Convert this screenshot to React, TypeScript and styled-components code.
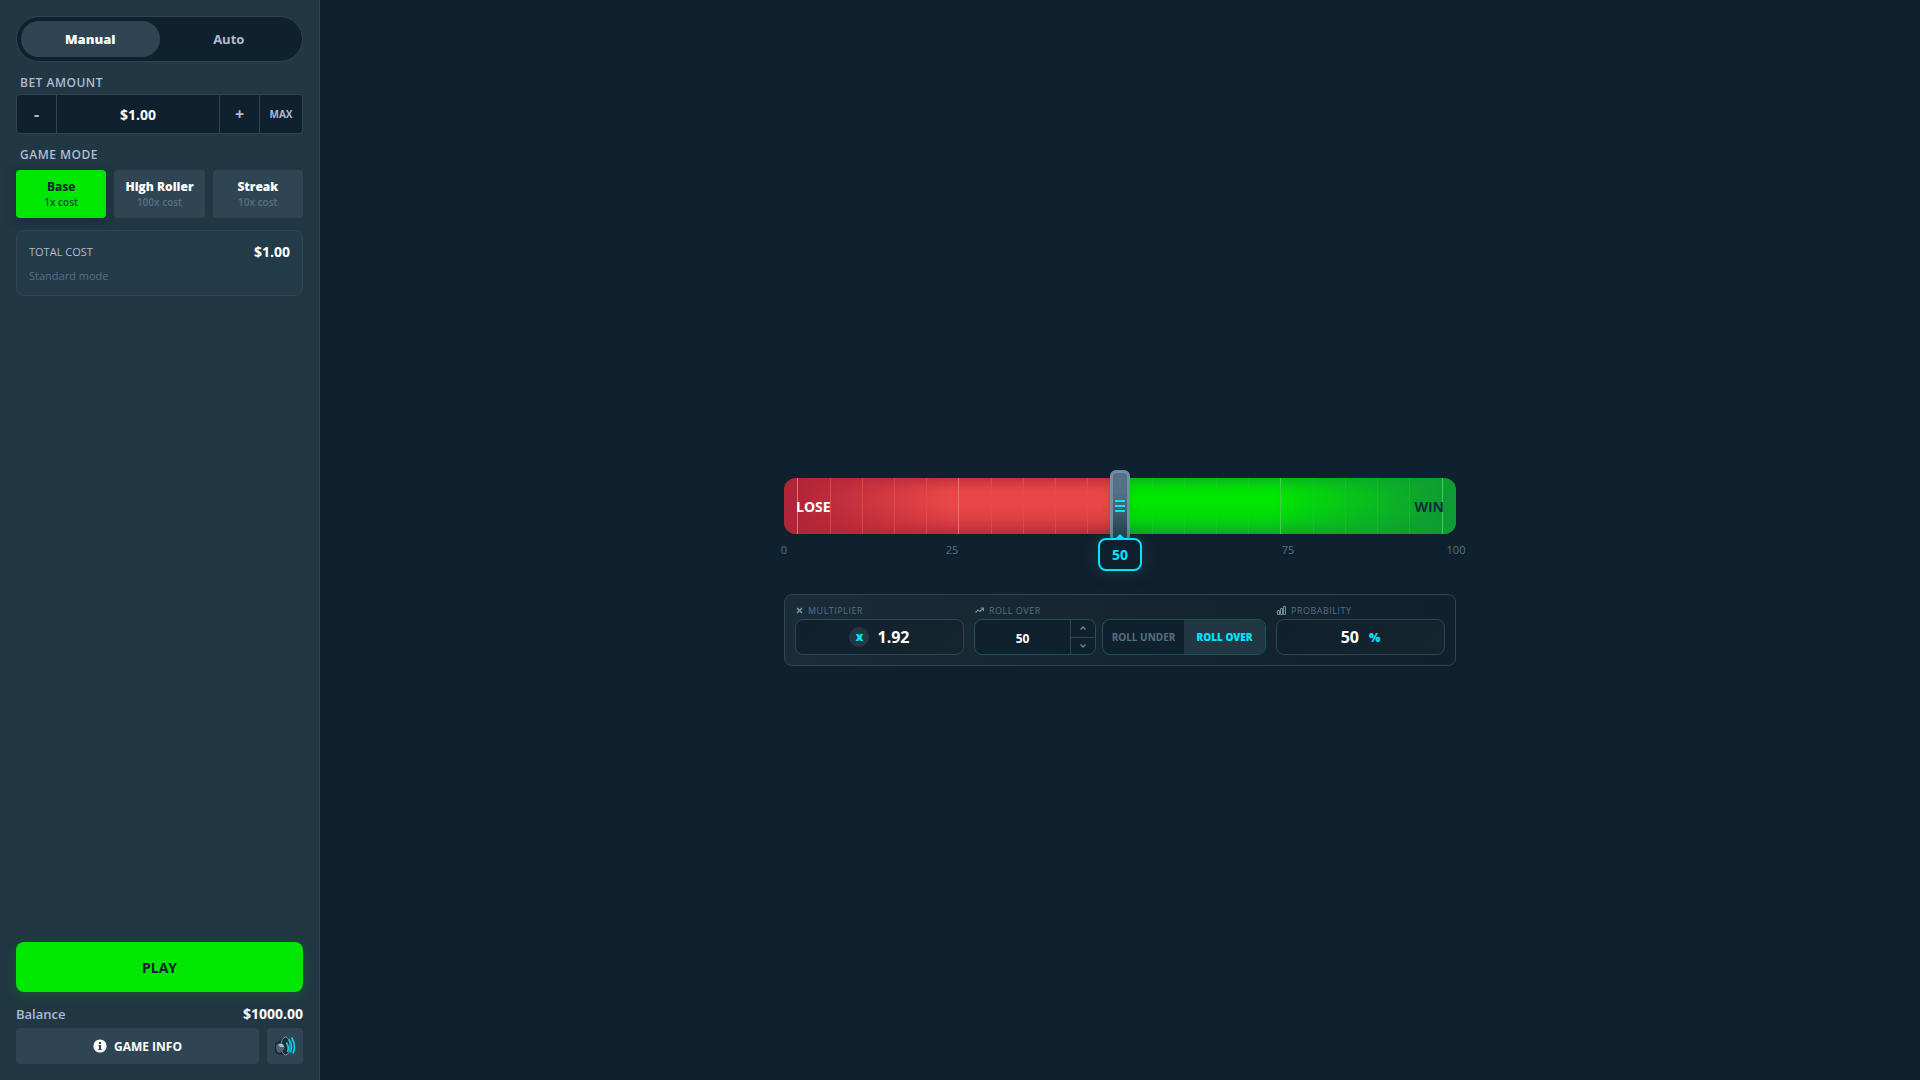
import React, { useState } from "react";
import styled, { createGlobalStyle, css } from "styled-components";

const GlobalStyle = createGlobalStyle`
  *, *::before, *::after { box-sizing: border-box; }
  body {
    margin: 0;
    background: #0f212e;
    color: #fff;
    font-family: "Open Sans", "Noto Sans", sans-serif;
  }
  button, input { font-family: inherit; color: inherit; margin: 0; padding: 0; border: 0; background: none; }
  button { cursor: pointer; }
`;

const Page = styled.div`
  display: flex;
  min-height: 100vh;
`;

const Sidebar = styled.aside`
  flex: 0 0 320px;
  min-width: 0;
  display: flex;
  flex-direction: column;
  padding: 16px;
  background: #213743;
  border-right: 1px solid #2f4553;
`;

const Tabs = styled.div`
  display: flex;
  padding: 4px;
  border: 1px solid #2f4553;
  border-radius: 24px;
  background: #0f212e;
`;

const Tab = styled.button<{ $active: boolean }>`
  flex: 1;
  height: 36px;
  border-radius: 18px;
  font-size: 13px;
  font-weight: ${(p) => (p.$active ? 800 : 700)};
  color: ${(p) => (p.$active ? "#fff" : "#b1bad3")};
  background: ${(p) => (p.$active ? "#2f4553" : "transparent")};
`;

const FieldLabel = styled.label`
  display: block;
  margin-top: 13px;
  padding: 0 4px;
  font-size: 12px;
  line-height: 16px;
  font-weight: 600;
  letter-spacing: 0.5px;
  color: #b1bad3;
`;

const BetRow = styled.div`
  display: flex;
  height: 40px;
  margin-top: 3px;
  border: 1px solid #2f4553;
  border-radius: 4px;
  background: #0f212e;
  overflow: hidden;
`;

const BetStep = styled.button`
  flex: 0 0 39px;
  font-size: 16px;
  font-weight: 700;
  color: #b1bad3;
`;

const BetInput = styled.input`
  flex: 1;
  width: 0;
  min-width: 0;
  border-left: 1px solid #2f4553;
  border-right: 1px solid #2f4553;
  text-align: center;
  font-size: 14px;
  font-weight: 700;
`;

const MaxButton = styled(BetStep)`
  flex-basis: 43px;
  border-left: 1px solid #2f4553;
  font-size: 10px;
  font-weight: 700;
`;

const Modes = styled.div`
  display: grid;
  grid-template-columns: repeat(3, 1fr);
  gap: 8px;
  margin-top: 7px;
`;

const ModeButton = styled.button<{ $active: boolean }>`
  display: flex;
  flex-direction: column;
  align-items: center;
  justify-content: center;
  height: 48px;
  border-radius: 4px;
  font-size: 12px;
  line-height: 16px;
  font-weight: ${(p) => (p.$active ? 700 : 800)};
  white-space: nowrap;
  background: ${(p) => (p.$active ? "#00e701" : "#2f4553")};
  color: ${(p) => (p.$active ? "#0f212e" : "#fff")};
  box-shadow: ${(p) => (p.$active ? "0 4px 12px rgba(15, 33, 46, 0.4)" : "none")};
`;

const ModeCost = styled.span<{ $active: boolean }>`
  font-size: 10px;
  line-height: 14px;
  font-weight: 600;
  color: ${(p) => (p.$active ? "#1a5037" : "#557086")};
`;

const CostCard = styled.section`
  margin-top: 12px;
  padding: 13px 12px 11px;
  border: 1px solid #2f4553;
  border-radius: 8px;
  background: #233a48;
`;

const Line = styled.div`
  display: flex;
  align-items: center;
  justify-content: space-between;
`;

const CostLabel = styled.span`
  font-size: 11px;
  line-height: 16px;
  color: #b1bad3;
`;

const Amount = styled.strong`
  font-size: 14px;
  line-height: 16px;
  font-weight: 700;
`;

const CostNote = styled.p`
  margin: 8px 0 0;
  font-size: 11px;
  line-height: 16px;
  color: #557086;
`;

const SidebarFooter = styled.footer`
  display: flex;
  flex-direction: column;
  margin-top: auto;
`;

const PlayButton = styled.button`
  height: 50px;
  border-radius: 8px;
  background: #00e701;
  box-shadow: 0 4px 12px rgba(0, 231, 1, 0.15);
  color: #0f212e;
  font-size: 14px;
  font-weight: 700;
`;

const BalanceLine = styled(Line)`
  margin: 12px 0 4px;
  font-size: 13px;
  line-height: 20px;
  font-weight: 600;
  color: #b1bad3;
`;

const BalanceValue = styled(Amount)`
  color: #fff;
`;

const FooterActions = styled.div`
  display: flex;
  gap: 8px;
`;

const InfoButton = styled.button`
  flex: 1;
  display: flex;
  align-items: center;
  justify-content: center;
  gap: 7px;
  height: 36px;
  border-radius: 4px;
  background: #2f4553;
  font-size: 12px;
  font-weight: 700;
`;

const SoundButton = styled(InfoButton)`
  flex: 0 0 36px;
`;

const Main = styled.main`
  flex: 1;
  display: flex;
  flex-direction: column;
  align-items: center;
  justify-content: center;
  padding: 64px 24px 0;
`;

const Game = styled.div`
  width: 100%;
  max-width: 672px;
`;

const TrackArea = styled.div`
  position: relative;
`;

const Track = styled.div`
  position: relative;
  display: flex;
  height: 56px;
  border-radius: 12px;
  overflow: hidden;
`;

const Zone = styled.div<{ $win?: boolean }>`
  flex: 1;
  display: flex;
  align-items: center;
  justify-content: ${(p) => (p.$win ? "flex-end" : "flex-start")};
  padding: 0 12px;
  font-size: 14px;
  font-weight: 700;
  ${(p) =>
    p.$win
      ? css`
          color: #0f2f3a;
          background: linear-gradient(180deg, rgba(14, 156, 52, 0) 45%, rgba(14, 156, 52, 0.4)),
            linear-gradient(275deg, #109c34 5%, #00e701 55%);
          box-shadow: inset 0 0 14px 3px #109c34;
        `
      : css`
          color: #fff;
          background: linear-gradient(180deg, rgba(178, 37, 56, 0) 45%, rgba(178, 37, 56, 0.4)),
            linear-gradient(85deg, #b22538 5%, #e94848 50%);
          box-shadow: inset 0 0 14px 3px #b22538;
        `}
`;

const ZoneName = styled.span`
  position: relative;
  z-index: 1;
`;

const Ticks = styled.div`
  position: absolute;
  inset: 0 2%;
  display: flex;
  justify-content: space-between;
  pointer-events: none;
`;

const Tick = styled.i<{ $major: boolean; $win: boolean }>`
  width: 1px;
  background: ${(p) => (p.$win ? (p.$major ? "#3fce4c" : "#20d030") : p.$major ? "#e87070" : "#e94848")};
  opacity: ${(p) => (p.$major ? 1 : p.$win ? 0.35 : 0.8)};
`;

const Handle = styled.div`
  position: absolute;
  top: -8px;
  left: 50%;
  width: 20px;
  height: 72px;
  margin-left: -10px;
  display: flex;
  flex-direction: column;
  align-items: center;
  justify-content: center;
  gap: 3px;
  border: 3px solid #708fa0;
  border-radius: 6px;
  background: linear-gradient(180deg, #557086 30%, #213f4b);
`;

const Grip = styled.i`
  width: 10px;
  height: 2px;
  background: #00e5ff;
`;

const Bubble = styled.output`
  position: absolute;
  top: 60px;
  left: 50%;
  width: 44px;
  height: 33px;
  margin-left: -22px;
  display: flex;
  align-items: center;
  justify-content: center;
  border: 2px solid #00e5ff;
  border-radius: 8px;
  background: #0f212e;
  box-shadow: 0 0 16px rgba(47, 69, 83, 0.6);
  color: #00e5ff;
  font-size: 14px;
  font-weight: 700;
  &::before {
    content: "";
    position: absolute;
    top: -6px;
    left: 16px;
    border: 4px solid transparent;
    border-top: 0;
    border-bottom-color: #00e5ff;
  }
`;

const Scale = styled.div`
  display: flex;
  justify-content: space-between;
  height: 16px;
  margin-top: 8px;
  font-size: 11px;
  line-height: 16px;
  color: #557086;
`;

const ScaleMark = styled.span`
  width: 0;
  display: flex;
  justify-content: center;
`;

const Controls = styled.section`
  display: grid;
  grid-template-columns: 169fr 292fr 169fr;
  gap: 10px;
  margin-top: 36px;
  padding: 7px 10px 10px;
  border: 1px solid #2f4553;
  border-radius: 8px;
  background: linear-gradient(90deg, #1a2c38, #15252f 60%, #0f212e);
`;

const ControlLabel = styled.label`
  display: flex;
  align-items: center;
  gap: 5px;
  height: 16px;
  margin-bottom: 1px;
  padding-left: 1px;
  font-size: 9px;
  letter-spacing: 0.5px;
  color: #557086;
`;

const ValueBox = styled.div`
  display: flex;
  align-items: center;
  justify-content: center;
  gap: 8px;
  height: 36px;
  border: 1px solid #2f4553;
  border-radius: 8px;
  background: linear-gradient(135deg, #0f212e, #15252f);
`;

const Value = styled.output`
  font-size: 16px;
  font-weight: 700;
`;

const TimesBadge = styled.span`
  display: grid;
  place-items: center;
  width: 20px;
  height: 20px;
  border-radius: 50%;
  background: #213743;
  color: #00e5ff;
  font-size: 12px;
  line-height: 20px;
  font-weight: 800;
`;

const Percent = styled.span`
  padding-left: 2px;
  font-size: 12px;
  font-weight: 800;
  color: #00e5ff;
`;

const RollRow = styled.div`
  display: grid;
  grid-template-columns: 122fr 164fr;
  gap: 6px;
`;

const RollBox = styled.div`
  display: flex;
  height: 36px;
  border: 1px solid #1d5257;
  border-radius: 8px;
  background: #0f212e;
  overflow: hidden;
`;

const RollInput = styled.input`
  flex: 1;
  width: 0;
  min-width: 0;
  padding-top: 2px;
  text-align: center;
  font-size: 12px;
  font-weight: 700;
`;

const Stepper = styled.div`
  flex: 0 0 25px;
  display: flex;
  flex-direction: column;
  border-left: 1px solid #2f4553;
`;

const StepButton = styled.button`
  flex: 1;
  display: grid;
  place-items: center;
  & + & { border-top: 1px solid #2f4553; }
`;

const DirectionButton = styled.button<{ $active: boolean }>`
  flex: 1;
  white-space: nowrap;
  font-size: 10px;
  font-weight: ${(p) => (p.$active ? 800 : 700)};
  color: ${(p) => (p.$active ? "#00e5ff" : "#557086")};
  background: ${(p) => (p.$active ? "#213743" : "transparent")};
`;

const InfoIcon = () => (
  <svg width="14" height="14" viewBox="0 0 14 14" aria-hidden="true">
    <circle cx="7" cy="7" r="6.6" fill="#fff" />
    <path d="M6 3h2v2H6zM5.4 6H8v4h.7v1H5.4v-1H6V7h-.6z" fill="#2f4553" />
  </svg>
);

const SpeakerIcon = () => (
  <svg width="20" height="20" viewBox="0 0 20 20" aria-hidden="true">
    <path d="M0 8.500Q0 6.500 3 6L9 1.500V19L3 18.500Q0 17 0 14z" fill="#152631" />
    <ellipse cx="10.500" cy="10" rx="4.500" ry="9" fill="#1b2f3b" stroke="#7f929d" strokeWidth="1" />
    <path d="M1 9q3-3 7-1l2 3-2 4q-3 3-6 1-1-3-1-7z" fill="#4d6371" />
    <path d="M3 8.500q3-1.500 5 0l1 2.500H5z" fill="#a9bac4" />
    <path d="M11.500 6.500q3 5 1 9.500M14 3.500q4 6 1.500 13M16.500 1.500q5 8 1.500 16" fill="none" stroke="#00d5ee" strokeWidth="1.600" />
  </svg>
);

const CrossIcon = () => (
  <svg width="7" height="7" viewBox="0 0 7 7" fill="none" stroke="#6fa9a6" strokeWidth="1.400" aria-hidden="true">
    <path d="M1 1l5 5M6 1L1 6" />
  </svg>
);

const TrendIcon = () => (
  <svg width="9" height="7" viewBox="0 0 9 7" fill="none" stroke="#6f8f9f" strokeWidth="1.200" aria-hidden="true">
    <path d="M.5 5.500L3 3l2 1.500L8 1.500M5.500 1h3v3" />
  </svg>
);

const BarsIcon = () => (
  <svg width="9" height="9" viewBox="0 0 9 9" fill="none" stroke="#6f8f9f" aria-hidden="true">
    <path d="M.5 8.500v-4h2v4zM3.500 8.500v-6h2v6zM6.500 8.500v-8h2v8z" />
  </svg>
);

const Chevron = ({ down }: { down?: boolean }) => (
  <svg width="6" height="4" viewBox="0 0 6 4" fill="none" stroke="#6d8796" strokeWidth="1.300" aria-hidden="true">
    <path d={down ? "M.5 .5L3 3L5.500 .5" : "M.5 3.500L3 1L5.500 3.500"} />
  </svg>
);

const MODES = [
  { name: "Base", cost: 1, note: "Standard mode" },
  { name: "High Roller", cost: 100, note: "High roller mode" },
  { name: "Streak", cost: 10, note: "Streak mode" },
];

const SCALE = [0, 25, 50, 75, 100];

export default function App() {
  const [tab, setTab] = useState("Manual");
  const [mode, setMode] = useState(0);
  const [bet, setBet] = useState("$1.00");
  const [target, setTarget] = useState(50);
  const [direction, setDirection] = useState("ROLL OVER");

  const amount = Number(bet.replace("$", "")) || 0;
  const setAmount = (n: number) => setBet("$" + Math.max(0, n).toFixed(2));

  return (
    <Page>
      <GlobalStyle />
      <Sidebar>
        <Tabs>
          {["Manual", "Auto"].map((name) => (
            <Tab key={name} $active={tab === name} onClick={() => setTab(name)}>
              {name}
            </Tab>
          ))}
        </Tabs>

        <FieldLabel htmlFor="bet">BET AMOUNT</FieldLabel>
        <BetRow>
          <BetStep onClick={() => setAmount(amount - 1)}>-</BetStep>
          <BetInput id="bet" value={bet} onChange={(e) => setBet(e.target.value)} />
          <BetStep onClick={() => setAmount(amount + 1)}>+</BetStep>
          <MaxButton onClick={() => setAmount(1000)}>MAX</MaxButton>
        </BetRow>

        <FieldLabel as="div">GAME MODE</FieldLabel>
        <Modes>
          {MODES.map((m, i) => (
            <ModeButton key={m.name} $active={i === mode} onClick={() => setMode(i)}>
              {m.name}
              <ModeCost $active={i === mode}>{m.cost}x cost</ModeCost>
            </ModeButton>
          ))}
        </Modes>

        <CostCard>
          <Line>
            <CostLabel>TOTAL COST</CostLabel>
            <Amount>${(amount * MODES[mode].cost).toFixed(2)}</Amount>
          </Line>
          <CostNote>{MODES[mode].note}</CostNote>
        </CostCard>

        <SidebarFooter>
          <PlayButton>PLAY</PlayButton>
          <BalanceLine>
            Balance
            <BalanceValue>$1000.00</BalanceValue>
          </BalanceLine>
          <FooterActions>
            <InfoButton>
              <InfoIcon />
              GAME INFO
            </InfoButton>
            <SoundButton aria-label="Sound">
              <SpeakerIcon />
            </SoundButton>
          </FooterActions>
        </SidebarFooter>
      </Sidebar>

      <Main>
        <Game>
          <TrackArea>
            <Track>
              <Zone>
                <ZoneName>LOSE</ZoneName>
              </Zone>
              <Zone $win>
                <ZoneName>WIN</ZoneName>
              </Zone>
              <Ticks>
                {Array.from({ length: 21 }, (_, i) => (
                  <Tick key={i} $major={i % 5 === 0} $win={i > 10} />
                ))}
              </Ticks>
            </Track>
            <Handle>
              <Grip />
              <Grip />
              <Grip />
            </Handle>
            <Bubble>{target}</Bubble>
          </TrackArea>
          <Scale>
            {SCALE.map((n) => (
              <ScaleMark key={n}>{n === 50 ? "" : n}</ScaleMark>
            ))}
          </Scale>

          <Controls>
            <div>
              <ControlLabel htmlFor="multiplier">
                <CrossIcon />
                MULTIPLIER
              </ControlLabel>
              <ValueBox>
                <TimesBadge>x</TimesBadge>
                <Value id="multiplier">1.92</Value>
              </ValueBox>
            </div>
            <div>
              <ControlLabel htmlFor="roll">
                <TrendIcon />
                ROLL OVER
              </ControlLabel>
              <RollRow>
                <RollBox>
                  <RollInput id="roll" value={target} onChange={(e) => setTarget(Number(e.target.value) || 0)} />
                  <Stepper>
                    <StepButton aria-label="Increase" onClick={() => setTarget(target + 1)}>
                      <Chevron />
                    </StepButton>
                    <StepButton aria-label="Decrease" onClick={() => setTarget(target - 1)}>
                      <Chevron down />
                    </StepButton>
                  </Stepper>
                </RollBox>
                <RollBox>
                  {["ROLL UNDER", "ROLL OVER"].map((d) => (
                    <DirectionButton key={d} $active={direction === d} onClick={() => setDirection(d)}>
                      {d}
                    </DirectionButton>
                  ))}
                </RollBox>
              </RollRow>
            </div>
            <div>
              <ControlLabel htmlFor="probability">
                <BarsIcon />
                PROBABILITY
              </ControlLabel>
              <ValueBox>
                <Value id="probability">50</Value>
                <Percent>%</Percent>
              </ValueBox>
            </div>
          </Controls>
        </Game>
      </Main>
    </Page>
  );
}
